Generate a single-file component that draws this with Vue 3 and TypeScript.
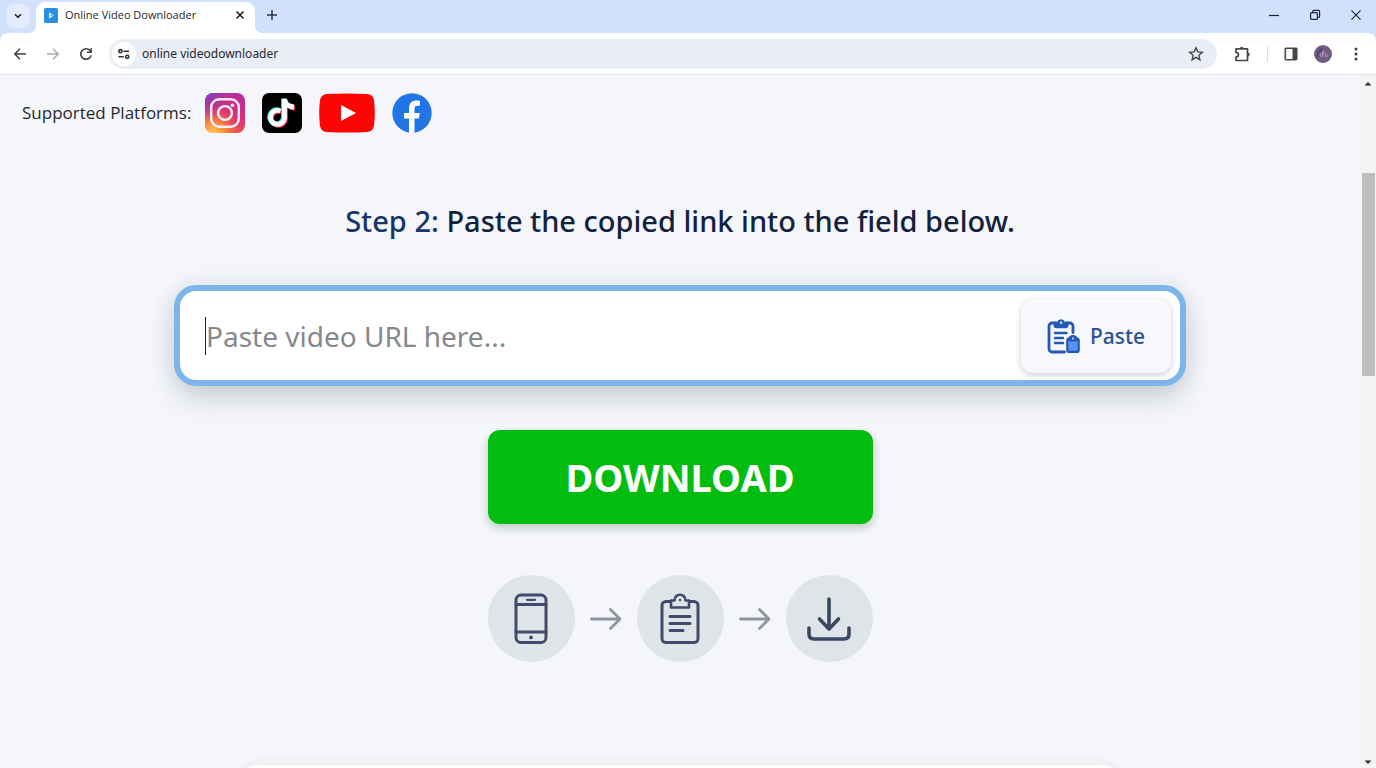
<script setup lang="ts">
import { ref } from 'vue'

const address = ref('online videodownloader')
const videoUrl = ref('')

async function pasteLink(): Promise<void> {
  videoUrl.value = await navigator.clipboard.readText()
}
</script>

<template>
  <div class="browser">
    <header class="tabstrip">
      <button class="tab-search" aria-label="Search tabs">
        <svg width="10" height="10" viewBox="0 0 10 10"><path d="M2 3.2 5 6.4 8 3.2" fill="none" stroke="#26282c" stroke-width="1.6" /></svg>
      </button>
      <div class="tab">
        <svg class="favicon" width="14" height="15" viewBox="0 0 14 15">
          <rect width="14" height="15" rx="1.5" fill="#2b8fe0" />
          <path d="M5 4.2 10 7.5 5 10.8z" fill="#d4f1ff" />
          <path d="M4.6 5.5v1M4.6 8.4v1M6.6 7.5h2" stroke="#2b8fe0" stroke-width=".8" />
        </svg>
        <span class="tab-title">Online Video Downloader</span>
        <button class="plain" aria-label="Close tab">
          <svg width="10" height="10" viewBox="0 0 10 10"><path d="M1.5 1.5l7 7M8.5 1.5l-7 7" stroke="#1d1f23" stroke-width="1.6" /></svg>
        </button>
      </div>
      <button class="plain new-tab" aria-label="New tab">
        <svg width="12" height="12" viewBox="0 0 12 12"><path d="M6 1v10M1 6h10" stroke="#33363e" stroke-width="1.5" /></svg>
      </button>
      <div class="window-controls">
        <button class="plain" aria-label="Minimize">
          <svg width="12" height="12" viewBox="0 0 12 12"><path d="M1 6.5h10" stroke="#1d2430" stroke-width="1.2" /></svg>
        </button>
        <button class="plain" aria-label="Restore">
          <svg width="12" height="12" viewBox="0 0 12 12" fill="none" stroke="#1d2430" stroke-width="1.2"><rect x="1.6" y="3.6" width="6.8" height="6.8" rx="1" /><path d="M3.8 3.4V2.4a1 1 0 0 1 1-1h4.8a1 1 0 0 1 1 1v5a1 1 0 0 1-1 1H8.6" /></svg>
        </button>
        <button class="plain" aria-label="Close window">
          <svg width="12" height="12" viewBox="0 0 12 12"><path d="M1.4 1.4l9.2 9.2M10.6 1.4l-9.2 9.2" stroke="#1d2430" stroke-width="1.1" /></svg>
        </button>
      </div>
    </header>

    <nav class="toolbar">
      <div class="nav-buttons">
        <button class="plain" aria-label="Back">
          <svg width="14" height="14" viewBox="0 0 14 14"><path d="M13 7H2M7 1.8 1.8 7 7 12.2" fill="none" stroke="#3c3f45" stroke-width="1.5" /></svg>
        </button>
        <button class="plain" aria-label="Forward">
          <svg width="14" height="14" viewBox="0 0 14 14"><path d="M1 7h11M7 1.8 12.2 7 7 12.2" fill="none" stroke="#aaacb0" stroke-width="1.5" /></svg>
        </button>
        <button class="plain" aria-label="Reload">
          <svg width="14" height="14" viewBox="0 0 14 14"><path d="M12.2 8.4A5.3 5.3 0 1 1 11 3.4l1.2 1.3" fill="none" stroke="#3c3f45" stroke-width="1.6" /><path d="M12.8 1v5H7.9V4.6h3.5V1z" fill="#3c3f45" /></svg>
        </button>
      </div>
      <div class="omnibox">
        <button class="site-info" aria-label="View site information">
          <svg width="14" height="12" viewBox="0 0 14 12" fill="none" stroke="#303238" stroke-width="1.6"><circle cx="3.4" cy="3.2" r="1.6" /><path d="M6.4 3.2H12M1.4 8.8h5.4" /><circle cx="10.2" cy="8.8" r="1.6" /></svg>
        </button>
        <input v-model="address" class="address" type="text" aria-label="Address" />
        <button class="plain" aria-label="Bookmark this page">
          <svg width="16" height="16" viewBox="0 0 16 16"><path d="M8 1.8l1.8 4.1 4.5.4-3.4 3 1 4.4L8 11.4l-3.900 2.300 1-4.400-3.400-3 4.500-.4z" fill="none" stroke="#45474f" stroke-width="1.4" /></svg>
        </button>
      </div>
      <div class="actions">
        <button class="plain" aria-label="Extensions">
          <svg width="18" height="18" viewBox="0 0 18 18"><path d="M3 3.800h11.500v11.700H3v-3.500c3.200 0 3.200-4.600 0-4.600z" fill="none" stroke="#45474b" stroke-width="1.700" stroke-linejoin="round" /><path d="M6.900 3.500a1.800 1.800 0 0 1 3.600 0zM15 7.800a1.800 1.800 0 0 1 0 3.600z" fill="#45474b" /></svg>
        </button>
        <span class="divider"></span>
        <button class="plain" aria-label="Side panel">
          <svg width="14" height="14" viewBox="0 0 14 14"><rect x="1.300" y="1.300" width="11.400" height="11.400" rx=".6" fill="none" stroke="#46474a" stroke-width="1.600" /><path d="M8.500 1h4.500v12H8.500z" fill="#46474a" /></svg>
        </button>
        <button class="plain" aria-label="Profile">
          <svg width="18" height="18" viewBox="0 0 18 18"><circle cx="9" cy="9" r="9" fill="#725c84" /><path d="M4 12c-1-3 1-7 5-8" fill="none" stroke="#57466d" stroke-width="2.500" /><path d="M8.500 8.500c-2-.6-3 1-2.300 2.300.8 1 2.300.3 2.500-1l.7-4.300-.9 6.300M11.600 8v4M13.300 10v2" fill="none" stroke="#b8a2ca" stroke-width=".9" /></svg>
        </button>
        <button class="plain" aria-label="Browser menu">
          <svg width="16" height="16" viewBox="0 0 16 16" fill="#3c3f45"><circle cx="8" cy="3" r="1.500" /><circle cx="8" cy="8" r="1.500" /><circle cx="8" cy="13" r="1.500" /></svg>
        </button>
      </div>
    </nav>

    <div class="viewport">
      <main class="page">
        <section class="platforms">
          <span class="platforms-label">Supported Platforms:</span>
          <div class="platform-icons">
            <svg width="40" height="40" viewBox="0 0 40 40" role="img" aria-label="Instagram">
              <defs>
                <linearGradient id="ig-base" x1=".8" y1="0" x2=".35" y2="1"><stop offset="0" stop-color="#b52ca6" /><stop offset=".5" stop-color="#dc3073" /><stop offset="1" stop-color="#f36a43" /></linearGradient>
                <radialGradient id="ig-warm" cx=".2" cy="1.050" r=".75"><stop offset="0" stop-color="#ffd35e" /><stop offset=".4" stop-color="#fa8f3d" /><stop offset="1" stop-color="#ee4057" stop-opacity="0" /></radialGradient>
                <radialGradient id="ig-cool" cx="0" cy="0" r=".7"><stop offset="0" stop-color="#6646c8" /><stop offset="1" stop-color="#a735ad" stop-opacity="0" /></radialGradient>
              </defs>
              <rect width="40" height="40" rx="8" fill="url(#ig-base)" />
              <rect width="40" height="40" rx="8" fill="url(#ig-warm)" />
              <rect width="40" height="40" rx="8" fill="url(#ig-cool)" />
              <g fill="none" stroke="#fff0fa" stroke-width="2.400"><rect x="6.200" y="6.200" width="27.600" height="27.600" rx="8" /><circle cx="20" cy="20" r="6.900" /></g>
              <circle cx="27.500" cy="12.300" r="1.800" fill="#fff0fa" />
            </svg>
            <svg width="40" height="40" viewBox="0 0 40 40" role="img" aria-label="TikTok">
              <rect width="40" height="40" rx="7" fill="#000" />
              <g fill="none" stroke-width="4.800">
                <path d="M18.500 18a7 7 0 1 0 4 7V6c.5 4.500 4 7.700 9.500 8" stroke="#f12d5c" transform="translate(1 1)" />
                <path d="M18.500 18a7 7 0 1 0 4 7V6c.5 4.500 4 7.700 9.500 8" stroke="#28e3e6" transform="translate(-1 -.6)" />
                <path d="M18.500 18a7 7 0 1 0 4 7V6c.5 4.500 4 7.700 9.500 8" stroke="#fff" />
              </g>
            </svg>
            <svg width="56" height="40" viewBox="0 0 56 40" role="img" aria-label="YouTube">
              <path d="M8 .9Q28-.1 48 .9q6.300.6 7 6.300 1.600 12.800 0 25.600-.7 5.700-7 6.300-20 1-40 0-6.300-.6-7-6.300-1.600-12.800 0-25.600Q1.700 1.500 8 .9z" fill="#fe0505" />
              <path d="M22 12v16l15-8z" fill="#fff" />
            </svg>
            <svg width="40" height="40" viewBox="0 0 40 40" role="img" aria-label="Facebook">
              <circle cx="20" cy="20" r="19.700" fill="#2175e5" />
              <path d="M17 39.800V25.600h-5V20h5v-4.500c0-5.400 3-7.900 7.700-7.900 1.600 0 3.200.3 3.200.3v4.900h-2.500c-2.200 0-2.900 1.200-2.900 3V20h5.300l-.9 5.600h-4.400v14.200a20 20 0 0 1-5.500 0z" fill="#fff" />
            </svg>
          </div>
        </section>

        <section class="step">
          <h1><span class="step-number">Step 2:</span> Paste the copied link into the field below.</h1>
          <form class="download-form" @submit.prevent>
            <div class="url-field">
              <span class="caret"></span>
              <input v-model="videoUrl" class="url-input" type="text" aria-label="Video URL" placeholder="Paste video URL here..." />
              <button class="paste" type="button" @click="pasteLink">
                <svg width="34" height="36" viewBox="0 0 34 36">
                  <path d="M8 5H5a3 3 0 0 0-3 3v23a3 3 0 0 0 3 3h12.500M20 5h3a3 3 0 0 1 3 3v6.500" fill="none" stroke="#2458b4" stroke-width="2.800" stroke-linecap="round" />
                  <path d="M6.500 3.800h3.600a4.200 4.200 0 0 1 7.800 0h3.600v3.400a3 3 0 0 1-3 3h-9a3 3 0 0 1-3-3z" fill="#2458b4" />
                  <circle cx="14" cy="4.800" r="1.300" fill="#d5e4fb" />
                  <path d="M8 15h11.500M8 20h8M8 25h8" stroke="#2458b4" stroke-width="2.400" stroke-linecap="round" />
                  <rect x="20.300" y="20.500" width="11.400" height="13.400" rx="2" fill="#5a93ec" stroke="#2458b4" stroke-width="2.200" />
                  <path d="M20.500 21.500q1.500-4.500 5.500-4.500t5.500 4.500l-2 2h-7z" fill="#2458b4" />
                  <circle cx="26" cy="20.500" r="1" fill="#d5e4fb" />
                </svg>
                Paste
              </button>
            </div>
            <button class="download" type="submit">DOWNLOAD</button>
          </form>

          <div class="flow">
            <span class="flow-icon">
              <svg width="34" height="52" viewBox="0 0 34 52" fill="none" stroke="#424b6b" stroke-width="3" stroke-linecap="round"><rect x="2" y="2" width="30" height="47.500" rx="5" /><path d="M2 11.500h30M2 39h30" /><path d="M13 6.800h8" stroke-width="2.200" /><circle cx="17" cy="44.400" r="1.900" fill="#424b6b" stroke="none" /></svg>
            </span>
            <svg class="arrow" width="32" height="24" viewBox="0 0 32 24"><path d="M1.500 12h28M20.500 2.500 30 12l-9.500 9.500" /></svg>
            <span class="flow-icon">
              <svg width="40" height="52" viewBox="0 0 40 52" fill="none" stroke="#424b6b" stroke-width="3" stroke-linecap="round" stroke-linejoin="round"><path d="M10.500 8.500H6a4 4 0 0 0-4 4v33a4 4 0 0 0 4 4h28a4 4 0 0 0 4-4v-33a4 4 0 0 0-4-4h-4.500" /><path d="M11 14.500V7.500h3.400c.4-3.500 2.600-5.800 5.600-5.800s5.200 2.300 5.600 5.800H29v7z" stroke-width="2.600" /><circle cx="20" cy="7" r="1.300" fill="#424b6b" stroke="none" /><path d="M10 23.500h20M10 30.500h20M10 37.500h13" /></svg>
            </span>
            <svg class="arrow" width="32" height="24" viewBox="0 0 32 24"><path d="M1.500 12h28M20.500 2.500 30 12l-9.500 9.500" /></svg>
            <span class="flow-icon">
              <svg width="44" height="44" viewBox="0 0 44 44" fill="none" stroke="#394760" stroke-width="3.600" stroke-linecap="round" stroke-linejoin="round"><path d="M22 2v30M12.500 22l9.500 10 9.500-10M2 31v6q0 5 5 5h30q5 0 5-5v-6" /></svg>
            </span>
          </div>
        </section>
        <section class="next-card"></section>
      </main>
      <div class="scrollbar" aria-hidden="true">
        <svg width="14" height="16" viewBox="0 0 14 16"><path d="M3.500 10.500 7 7l3.500 3.500z" fill="#333" /></svg>
        <span class="track"><span class="thumb"></span></span>
        <svg width="14" height="16" viewBox="0 0 14 16"><path d="M3.500 8.500 7 12l3.500-3.500z" fill="#333" /></svg>
      </div>
    </div>
  </div>
</template>

<style>
body {
  margin: 0;
}
</style>

<style scoped>
.browser {
  display: flex;
  flex-direction: column;
  height: 100vh;
  overflow: hidden;
  background: #d1e1fa;
  font-family: "Noto Sans", "Open Sans", sans-serif;
  color: #25272c;
}

.browser * {
  box-sizing: border-box;
}

button,
input {
  margin: 0;
  padding: 0;
  border: 0;
  background: none;
  font: inherit;
  color: inherit;
  outline: none;
}

svg {
  display: block;
  flex: none;
}

.plain {
  display: flex;
  align-items: center;
  justify-content: center;
}

.tabstrip {
  display: flex;
  align-items: center;
  height: 33px;
  padding: 0 14px 0 6px;
  background: #d1e0fb;
}

.tab-search {
  display: flex;
  align-items: center;
  justify-content: center;
  width: 24px;
  height: 24px;
  margin: 0 6px 2px 0;
  border-radius: 8px;
  background: #e3ecfd;
}

.tab {
  position: relative;
  display: flex;
  align-items: center;
  align-self: flex-end;
  gap: 7px;
  width: 219px;
  height: 31px;
  padding: 0 10px 5px 8px;
  border-radius: 9px 9px 0 0;
  background: #fff;
}

.tab::before,
.tab::after {
  content: "";
  position: absolute;
  bottom: 0;
  width: 8px;
  height: 8px;
}

.tab::before {
  right: 100%;
  background: radial-gradient(circle at 0 0, transparent 8px, #fff 8px);
}

.tab::after {
  left: 100%;
  background: radial-gradient(circle at 100% 0, transparent 8px, #fff 8px);
}

.tab-title {
  flex: 1;
  font-family: "Open Sans", "Noto Sans", sans-serif;
  font-size: 11px;
  line-height: 16px;
  white-space: nowrap;
}

.new-tab {
  margin: 0 0 3px 11px;
}

.window-controls {
  display: flex;
  gap: 29px;
  margin: 0 0 3px auto;
}

.toolbar {
  display: flex;
  align-items: center;
  gap: 16px;
  height: 42px;
  padding: 0 12px 0 13px;
  border-bottom: 1px solid #e6e8ea;
  border-radius: 8px 8px 0 0;
  background: #fff;
}

.nav-buttons {
  display: flex;
  gap: 19px;
}

.omnibox {
  display: flex;
  flex: 1;
  align-items: center;
  gap: 6px;
  height: 30px;
  padding: 0 13px 0 3px;
  border-radius: 15px;
  background: #e9edf8;
}

.site-info {
  display: flex;
  align-items: center;
  justify-content: center;
  width: 24px;
  height: 24px;
  border-radius: 12px;
  background: #fff;
}

.address {
  flex: 1;
  min-width: 0;
  font-size: 12px;
  line-height: 20px;
}

.actions {
  display: flex;
  align-items: center;
  gap: 16px;
}

.divider {
  width: 1px;
  height: 16px;
  background: #d9dde3;
}

.viewport {
  display: flex;
  flex: 1;
  min-height: 0;
  background: #f4f6f9;
}

.page {
  display: flex;
  flex: 1;
  flex-direction: column;
  min-width: 0;
  overflow: hidden;
}

.platforms {
  display: flex;
  align-items: center;
  gap: 14px;
  padding: 18px 22px 0;
}

.platforms-label {
  font-family: "Open Sans", "Noto Sans", sans-serif;
  font-size: 17px;
  line-height: 24px;
  white-space: nowrap;
}

.platform-icons {
  display: flex;
  gap: 17px;
}

.step {
  display: flex;
  flex-direction: column;
  align-items: center;
  padding-top: 68px;
}

h1 {
  margin: 0;
  font-size: 29px;
  font-weight: 500;
  line-height: 40px;
  color: #12213f;
}

.step-number {
  color: #173567;
}

.download-form {
  display: flex;
  flex-direction: column;
  align-items: center;
  gap: 44px;
  width: 100%;
  padding: 44px 174px 0;
}

.url-field {
  display: flex;
  align-items: center;
  width: 100%;
  height: 101px;
  padding: 0 9px 0 25px;
  border: 6px solid #7cb5ea;
  border-radius: 22px;
  background: #fff;
  box-shadow: 0 12px 26px rgba(40, 50, 65, 0.18), 0 0 24px rgba(40, 50, 65, 0.07);
}

.caret {
  width: 1px;
  height: 38px;
  background: #222;
}

.url-input {
  flex: 1;
  min-width: 0;
  font-size: 28px;
  line-height: 40px;
}

.url-input::placeholder {
  color: #85888c;
  opacity: 1;
}

.paste {
  display: flex;
  align-items: center;
  gap: 9px;
  height: 74px;
  padding: 0 26px;
  border-radius: 12px;
  background: #f6f8fb;
  box-shadow: 0 3px 6px rgba(30, 40, 60, 0.16), 0 0 5px rgba(30, 40, 60, 0.06);
  font-size: 21px;
  font-weight: 500;
  line-height: 32px;
  color: #2b5298;
}

.download {
  width: 385px;
  height: 94px;
  border-radius: 12px;
  background: #02bd10;
  box-shadow: 0 4px 8px rgba(30, 50, 40, 0.24);
  font-size: 38px;
  font-weight: 700;
  line-height: 52px;
  color: #fff;
}

.flow {
  display: flex;
  align-items: center;
  gap: 15px;
  padding-top: 51px;
}

.flow-icon {
  display: flex;
  align-items: center;
  justify-content: center;
  width: 87px;
  height: 87px;
  border-radius: 50%;
  background: #dfe4e9;
}

.arrow path {
  fill: none;
  stroke: #8f94a2;
  stroke-width: 2.8;
  stroke-linecap: round;
  stroke-linejoin: round;
}

.next-card {
  flex: none;
  height: 200px;
  margin: 103px 240px 0;
  border-radius: 16px;
  background: #fff;
  box-shadow: 0 0 12px rgba(40, 50, 50, 0.08);
}

.scrollbar {
  display: flex;
  flex-direction: column;
  align-items: flex-end;
  width: 16px;
  padding-right: 1px;
  background: #f3f4f5;
}

.track {
  flex: 1;
  width: 13px;
  padding-top: 82px;
}

.thumb {
  display: block;
  height: 35%;
  background: #bdbdbd;
}
</style>
